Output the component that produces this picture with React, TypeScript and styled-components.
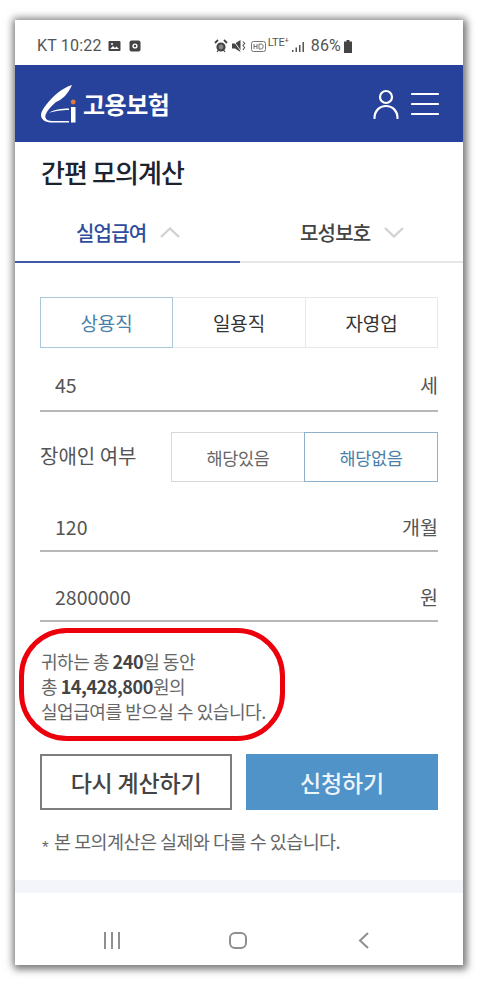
import React from 'react';
import styled, { createGlobalStyle } from 'styled-components';

const GlobalStyle = createGlobalStyle`
  html, body {
    margin: 0;
    padding: 0;
    background: #fff;
  }
  * {
    box-sizing: border-box;
  }
  body {
    font-family: "Noto Sans CJK KR", "Noto Sans", sans-serif;
  }
`;

const Page = styled.div`
  width: 478px;
  height: 985px;
  padding: 20px 15px;
  overflow: hidden;
`;

const Phone = styled.div`
  width: 448px;
  height: 945px;
  display: flex;
  flex-direction: column;
  background: #fff;
  box-shadow: 0 0 8px 2px rgba(70, 70, 70, 0.55), 2px 3px 7px 2px rgba(70, 70, 70, 0.45);
`;

const StatusBar = styled.div`
  height: 45px;
  padding: 17px 22px 0;
  display: flex;
  align-items: flex-start;
  justify-content: space-between;
  font-family: "Roboto", sans-serif;
  font-size: 16px;
  line-height: 18px;
  color: #555;
`;

const StatusGroup = styled.div`
  display: flex;
  align-items: center;
  gap: 6px;
`;

const StatusRight = styled(StatusGroup)`
  gap: 2px;
  margin-right: 89px;
`;

const Header = styled.header`
  height: 77px;
  padding: 0 24px 0 25px;
  display: flex;
  align-items: center;
  justify-content: space-between;
  background: #27429a;
`;

const Brand = styled.div`
  display: flex;
  align-items: center;
  gap: 7px;
  color: #fff;
  font-size: 24px;
  line-height: 34px;
  font-weight: 700;
  letter-spacing: -0.5px;
`;

const HeaderIcons = styled.div`
  display: flex;
  align-items: center;
  gap: 12px;
`;

const Content = styled.main`
  flex: 1;
  display: flex;
  flex-direction: column;
`;

const Title = styled.h1`
  margin: 0;
  padding: 12px 26px 0;
  font-size: 26px;
  line-height: 36px;
  font-weight: 500;
  letter-spacing: -0.9px;
  color: #1c2330;
`;

const Tabs = styled.div`
  margin-top: 15px;
  display: grid;
  grid-template-columns: 225px 223px;
`;

const Tab = styled.div<{ $active?: boolean }>`
  height: 58px;
  padding: 0 0 1px ${({ $active }) => ($active ? '61px' : '60px')};
  display: flex;
  align-items: center;
  gap: 14px;
  font-size: 20px;
  font-weight: 500;
  letter-spacing: -0.8px;
  color: ${({ $active }) => ($active ? '#2f4d9c' : '#444')};
  border-bottom: 2px solid ${({ $active }) => ($active ? '#3f5ba6' : '#e6e6e6')};
`;

const Form = styled.div`
  padding: 34px 25px 0;
  display: flex;
  flex-direction: column;
`;

const Segments = styled.div`
  display: grid;
  grid-template-columns: 133px 133px 132px;
  height: 51px;
`;

const Segment = styled.div<{ $active?: boolean }>`
  display: flex;
  align-items: center;
  justify-content: center;
  font-size: 19px;
  letter-spacing: -0.2px;
  margin-left: ${({ $active }) => ($active ? '0' : '-1px')};
  color: ${({ $active }) => ($active ? '#4a7fa9' : '#333')};
  border: 1px solid ${({ $active }) => ($active ? '#a9c7d8' : '#e6e9ec')};
  position: relative;
  z-index: ${({ $active }) => ($active ? 1 : 0)};
`;

const InputRow = styled.div<{ $height: number; $bottom: number }>`
  height: ${({ $height }) => $height}px;
  padding: 0 0 ${({ $bottom }) => $bottom}px 15px;
  display: flex;
  align-items: flex-end;
  justify-content: space-between;
  font-size: 19.5px;
  line-height: 27px;
  color: #555;
  border-bottom: 2px solid #b8b8b8;
`;

const Unit = styled.span`
  color: #555;
`;

const ChoiceRow = styled.div`
  margin-top: 20px;
  display: flex;
  align-items: center;
  justify-content: space-between;
`;

const ChoiceLabel = styled.span`
  font-size: 20px;
  line-height: 46px;
  padding-bottom: 2px;
  color: #555;
`;

const Choices = styled.div`
  display: grid;
  grid-template-columns: 134px 133px;
  height: 50px;
  width: 267px;
`;

const Choice = styled.div<{ $active?: boolean }>`
  display: flex;
  align-items: center;
  justify-content: center;
  font-size: 17.5px;
  letter-spacing: -0.3px;
  color: ${({ $active }) => ($active ? '#4a7fa9' : '#666')};
  border: 1px solid ${({ $active }) => ($active ? '#8fb0cb' : '#d6d9dc')};
  margin-left: ${({ $active }) => ($active ? '-1px' : '0')};
`;

const Result = styled.div`
  margin: 6px 0 0 -21px;
  width: 266px;
  height: 113px;
  padding: 16px 0 0 17px;
  border: 5px solid #ec000c;
  border-radius: 48px;
  font-size: 18px;
  line-height: 25px;
  letter-spacing: -0.45px;
  color: #666;
  white-space: nowrap;
`;

const Strong = styled.b`
  font-weight: 700;
  color: #444;
`;

const Buttons = styled.div`
  margin-top: 13px;
  display: grid;
  grid-template-columns: 192px 192px;
  justify-content: space-between;
`;

const Button = styled.div<{ $primary?: boolean }>`
  height: 56px;
  display: flex;
  align-items: center;
  justify-content: center;
  font-size: 23px;
  font-weight: 500;
  letter-spacing: -0.2px;
  color: ${({ $primary }) => ($primary ? '#eef5fa' : '#444')};
  background: ${({ $primary }) => ($primary ? '#4f93c9' : '#fff')};
  border: ${({ $primary }) => ($primary ? '0' : '2px solid #7d7d7d')};
`;

const Note = styled.p`
  margin: 18px 0 0;
  display: flex;
  align-items: flex-start;
  gap: 6px;
  font-size: 18.5px;
  line-height: 26px;
  letter-spacing: -0.55px;
  color: #666;
`;

const Star = styled.span`
  height: 26px;
  padding: 11px 0 0 2px;
  font-family: "Liberation Sans", sans-serif;
  font-size: 17px;
  line-height: 17px;
`;

const Band = styled.div`
  margin-top: 26px;
  height: 13px;
  background: #f3f5fa;
`;

const NavBar = styled.nav`
  flex: 1;
  display: grid;
  grid-template-columns: 126px 125px 126px;
  padding: 39px 0 0 34px;
  justify-content: start;
`;

const NavCell = styled.div`
  display: flex;
  justify-content: center;
`;

const Icon = styled.svg`
  display: block;
  flex: none;
`;

const StatusText = styled.span`
  letter-spacing: 0.2px;
`;

const LteText = styled.span`
  font-size: 11px;
  line-height: 12px;
  margin-top: -6px;
  letter-spacing: -0.2px;
  color: #555;
`;

function App() {
  return (
    <Page>
      <GlobalStyle />
      <Phone>
        <StatusBar>
          <StatusGroup>
            <StatusText>KT 10:22</StatusText>
            <Icon width="13" height="12" viewBox="0 0 13 12">
              <rect x="0.5" y="1" width="12" height="10" rx="1" fill="#444" />
              <path d="M2 9l3-3 2 2 1.5-1.5L11 9z" fill="#fff" />
              <circle cx="4" cy="4" r="1" fill="#fff" />
            </Icon>
            <Icon width="12" height="12" viewBox="0 0 12 12" style={{ marginLeft: 2 }}>
              <rect x="0.5" y="0.5" width="11" height="11" rx="2" fill="#444" />
              <circle cx="6" cy="6" r="2.6" fill="#fff" />
              <circle cx="6" cy="6" r="1.2" fill="#444" />
            </Icon>
          </StatusGroup>
          <StatusRight>
            <Icon width="14" height="14" viewBox="0 0 14 14">
              <circle cx="7" cy="8" r="4.6" fill="#444" />
              <circle cx="7" cy="8" r="2.4" fill="#888" />
              <path d="M1 4l3-3M13 4l-3-3" stroke="#444" strokeWidth="1.8" />
              <path d="M3 13l1.5-2M11 13l-1.5-2" stroke="#444" strokeWidth="1.2" />
            </Icon>
            <Icon width="14" height="14" viewBox="0 0 14 14" style={{ marginLeft: 2 }}>
              <path d="M0 4.5h3L8.5 1v12L3 9.5H0z" fill="#444" />
              <path d="M1 1l8.5 12" stroke="#fff" strokeWidth="0.9" />
              <path d="M11 2.5l1.6 2-1.6 2 1.6 2-1.6 2.5" stroke="#555" strokeWidth="1.1" fill="none" />
            </Icon>
            <Icon width="15" height="11" viewBox="0 0 15 11" style={{ marginLeft: 3 }}>
              <rect x="0.5" y="0.5" width="14" height="10" rx="2" fill="none" stroke="#777" />
              <path d="M3 3v5M6 3v5M3 5.5h3M8 3v5h2.2q2-.3 2-2.5T10.2 3z" stroke="#666" strokeWidth="0.9" fill="none" />
            </Icon>
            <LteText>LTE⁺</LteText>
            <Icon width="13" height="11" viewBox="0 0 13 11" style={{ marginLeft: 1 }}>
              <rect x="0" y="9" width="1.5" height="2" fill="#555" />
              <rect x="3.5" y="6.5" width="1.5" height="4.5" fill="#555" />
              <rect x="7" y="4" width="1.5" height="7" fill="#555" />
              <rect x="10.5" y="1" width="1.5" height="10" fill="#555" />
            </Icon>
            <StatusText style={{ marginLeft: 4 }}>86%</StatusText>
            <Icon width="8" height="13" viewBox="0 0 8 13" style={{ marginLeft: 1 }}>
              <path d="M2.5 0h3v1.5H8V13H0V1.5h2.5z" fill="#444" />
            </Icon>
          </StatusRight>
        </StatusBar>

        <Header>
          <Brand>
            <Icon width="36" height="40" viewBox="0 0 36 40">
              <path
                d="M32 1C22 4 13 12 6 21 3 25 1 28 1 31c0 5 5 7.5 11 7.5h17V37H12c-5 0-7.500-3-6.500-6 1.500-4 5.500-9 10.500-13C22 16 28 10 32 1z"
                fill="#fff"
              />
              <path d="M9 29c5-2 13-3 20-3v-1.500C21 24.500 14 25.500 9 29z" fill="#fff" />
              <rect x="31" y="23" width="4.500" height="15.500" fill="#fff" />
              <circle cx="33.200" cy="18" r="2.400" fill="#e0793a" />
            </Icon>
            고용보험
          </Brand>
          <HeaderIcons>
            <Icon width="26" height="30" viewBox="0 0 26 30" fill="none" stroke="#fff" strokeWidth="2.2">
              <circle cx="13" cy="8" r="6" />
              <path d="M1.500 29c0-7 5-12 11.500-12s11.500 5 11.500 12" strokeLinecap="round" />
            </Icon>
            <Icon width="28" height="24" viewBox="0 0 28 24" stroke="#fff" strokeWidth="2.2" strokeLinecap="round">
              <path d="M1 2h26M1 12h26M1 22h26" />
            </Icon>
          </HeaderIcons>
        </Header>

        <Content>
          <Title>간편 모의계산</Title>
          <Tabs>
            <Tab $active>
              실업급여
              <Icon width="20" height="11" viewBox="0 0 20 11" fill="none" stroke="#d2d2d2" strokeWidth="2.4">
                <path d="M1 10l9-8.500 9 8.500" />
              </Icon>
            </Tab>
            <Tab>
              모성보호
              <Icon width="20" height="11" viewBox="0 0 20 11" fill="none" stroke="#d2d2d2" strokeWidth="2.4">
                <path d="M1 1l9 8.500L19 1" />
              </Icon>
            </Tab>
          </Tabs>

          <Form>
            <Segments>
              <Segment $active>상용직</Segment>
              <Segment>일용직</Segment>
              <Segment>자영업</Segment>
            </Segments>
            <InputRow $height={64} $bottom={12}>
              <span>45</span>
              <Unit>세</Unit>
            </InputRow>
            <ChoiceRow>
              <ChoiceLabel>장애인 여부</ChoiceLabel>
              <Choices>
                <Choice>해당있음</Choice>
                <Choice $active>해당없음</Choice>
              </Choices>
            </ChoiceRow>
            <InputRow $height={70} $bottom={10}>
              <span>120</span>
              <Unit>개월</Unit>
            </InputRow>
            <InputRow $height={70} $bottom={10}>
              <span>2800000</span>
              <Unit>원</Unit>
            </InputRow>
            <Result>
              귀하는 총 <Strong>240</Strong>일 동안
              <br />총 <Strong>14,428,800</Strong>원의
              <br />
              실업급여를 받으실 수 있습니다.
            </Result>
            <Buttons>
              <Button>다시 계산하기</Button>
              <Button $primary>신청하기</Button>
            </Buttons>
            <Note>
              <Star>*</Star>본 모의계산은 실제와 다를 수 있습니다.
            </Note>
          </Form>
          <Band />
          <NavBar>
            <NavCell>
              <Icon width="16" height="17" viewBox="0 0 16 17" stroke="#8f8f8f" strokeWidth="2">
                <path d="M1 0v17M8 0v17M15 0v17" />
              </Icon>
            </NavCell>
            <NavCell>
              <Icon width="18" height="17" viewBox="0 0 18 17" fill="none" stroke="#8f8f8f" strokeWidth="2">
                <rect x="1" y="1" width="16" height="15" rx="5" />
              </Icon>
            </NavCell>
            <NavCell>
              <Icon width="11" height="17" viewBox="0 0 11 17" fill="none" stroke="#8f8f8f" strokeWidth="2">
                <path d="M10 1L2 8.500l8 7.500" />
              </Icon>
            </NavCell>
          </NavBar>
        </Content>
      </Phone>
    </Page>
  );
}

export default App;
